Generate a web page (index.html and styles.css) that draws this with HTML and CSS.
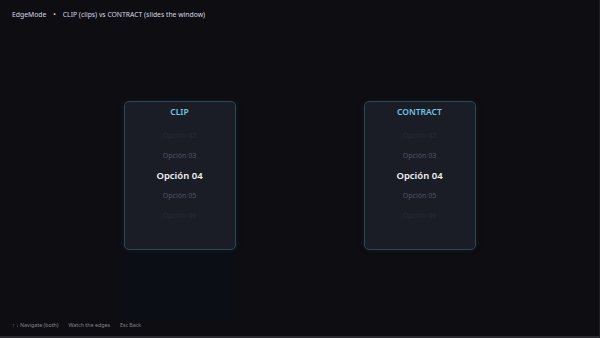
FILE: index.html
```html
<!DOCTYPE html>
<html>
<head>
  <title>EdgeMode</title>
  <link rel="stylesheet" href="styles.css">
</head>
<body>
  <div class="screen">
    <header class="topbar">
      <span>EdgeMode</span>
      <span class="dot">•</span>
      <span>CLIP (clips) vs CONTRACT (slides the window)</span>
    </header>

    <main class="stage">
      <div class="column column-clip">
        <div class="picker">
          <div class="picker-title">CLIP</div>
          <div class="item far">Opción 02</div>
          <div class="item near">Opción 03</div>
          <div class="item current">Opción 04</div>
          <div class="item near">Opción 05</div>
          <div class="item far">Opción 06</div>
        </div>
      </div>
      <div class="column">
        <div class="picker">
          <div class="picker-title">CONTRACT</div>
          <div class="item far">Opción 02</div>
          <div class="item near">Opción 03</div>
          <div class="item current">Opción 04</div>
          <div class="item near">Opción 05</div>
          <div class="item far">Opción 06</div>
        </div>
      </div>
    </main>

    <footer class="hints">
      <span>↑ ↓ Navigate (both)</span>
      <span>Watch the edges</span>
      <span>Esc Back</span>
    </footer>
  </div>
</body>
</html>
```

FILE: styles.css
```css
html, body {
  margin: 0;
  padding: 0;
  background: #0d0d12;
}
body {
  font-family: "Noto Sans", "Open Sans", sans-serif;
  color: #d6d6de;
}
.screen {
  width: 600px;
  height: 338px;
  box-sizing: border-box;
  border-bottom: 2px solid #2a2a30;
  border-right: 1px solid #1c1c22;
  display: flex;
  flex-direction: column;
  overflow: hidden;
}
.topbar {
  height: 28px;
  padding: 0 12px;
  display: flex;
  align-items: center;
  gap: 5px;
  font-size: 6.8px;
  color: #d8d8e0;
}
.dot {
  padding: 0 2px;
}
.stage {
  flex: 1;
  display: flex;
  justify-content: center;
  gap: 123px;
  padding-top: 73px;
}
.column {
  width: 117px;
  display: flex;
  justify-content: center;
}
.column-clip {
  background: #0c0e15;
}
.picker {
  width: 112px;
  height: 149px;
  box-sizing: border-box;
  background: #1a1d26;
  border: 1px solid #2d4651;
  border-radius: 5px;
  box-shadow: 0 0 6px rgba(60, 110, 130, 0.15);
  display: flex;
  flex-direction: column;
  align-items: center;
  padding-top: 3px;
}
.picker-title {
  font-size: 8.5px;
  font-weight: 600;
  color: #6ec6e2;
  height: 14px;
  line-height: 14px;
  margin-bottom: 7px;
}
.item {
  height: 20px;
  line-height: 20px;
  font-size: 7px;
}
.item.far {
  color: #262a35;
}
.item.near {
  color: #505565;
}
.item.current {
  font-size: 9.5px;
  font-weight: 600;
  color: #f2f2f6;
}
.hints {
  height: 10px;
  margin-bottom: 6px;
  padding: 0 12px;
  display: flex;
  align-items: center;
  gap: 10px;
  font-size: 5.3px;
  color: #85858f;
}
```
